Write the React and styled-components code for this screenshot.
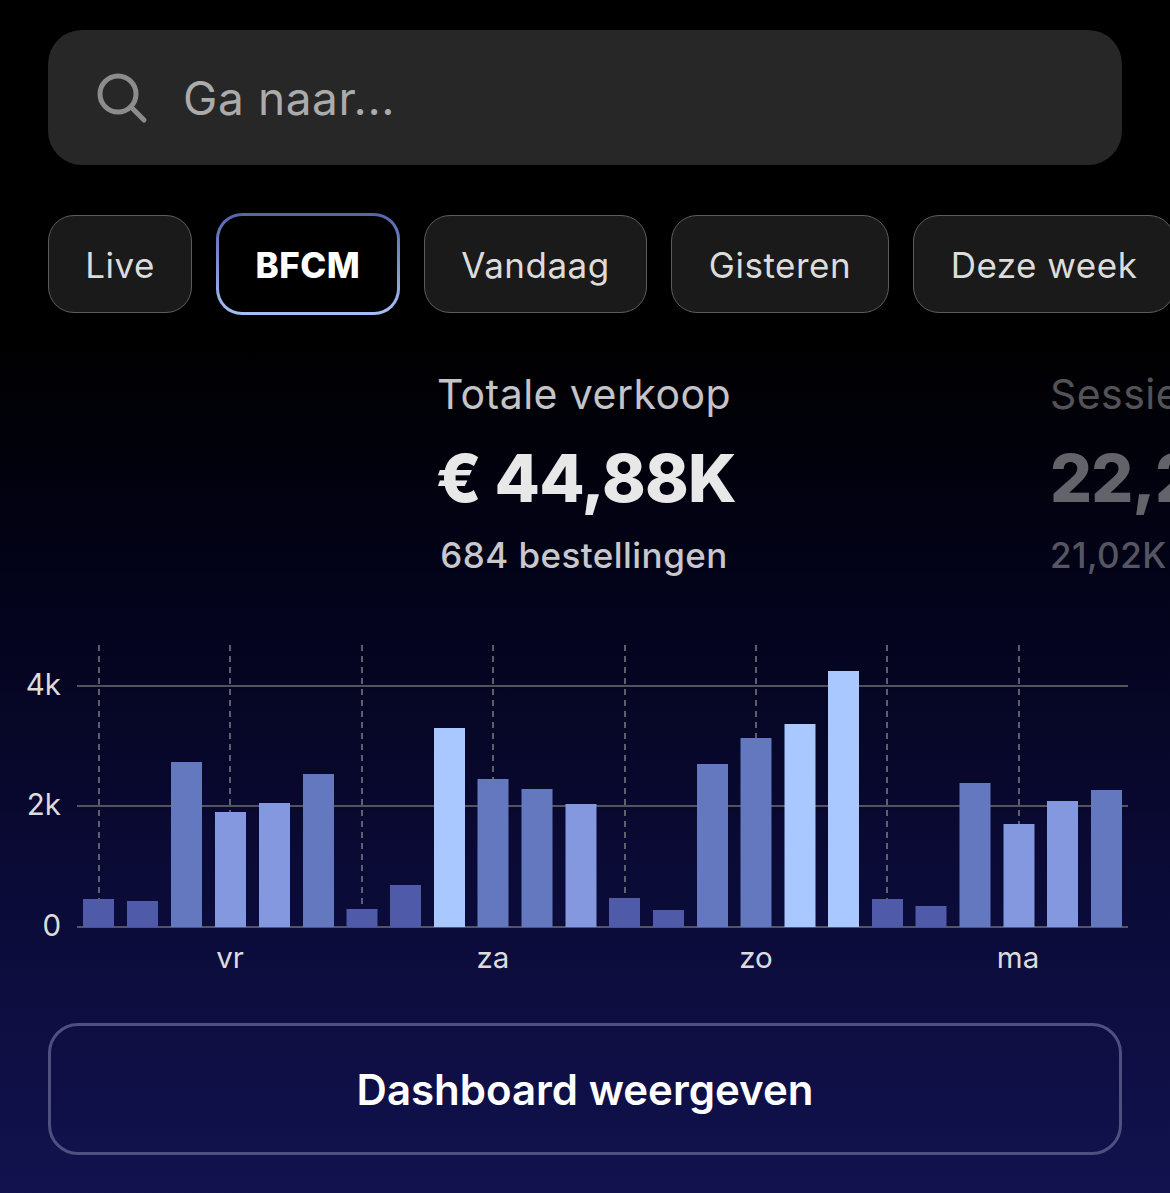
import React from "react";
import styled, { createGlobalStyle } from "styled-components";

const GlobalStyle = createGlobalStyle`
  html, body {
    margin: 0;
    padding: 0;
    background: #000;
  }
  * {
    box-sizing: border-box;
  }
`;

const Page = styled.div`
  width: 1170px;
  height: 1193px;
  overflow: hidden;
  padding-top: 30px;
  font-family: Inter, "Liberation Sans", sans-serif;
  background: linear-gradient(180deg, #000 0, #000 340px, #03031a 590px, #0a0a35 860px, #12124f 1193px);
`;

const SearchBar = styled.div`
  height: 135px;
  margin: 0 48px;
  padding-left: 48px;
  border-radius: 34px;
  background: #272727;
  display: flex;
  align-items: center;
  gap: 35px;
`;

const SearchText = styled.span`
  font-size: 46px;
  letter-spacing: 0.6px;
  color: #ababab;
`;

const ChipRow = styled.div`
  display: flex;
  align-items: center;
  gap: 24px;
  height: 102px;
  margin-top: 48px;
  padding-left: 48px;
`;

const Chip = styled.div`
  flex: none;
  width: ${(p) => p.$w}px;
  height: ${(p) => (p.$active ? 102 : 98)}px;
  border-radius: 26px;
  display: flex;
  align-items: center;
  justify-content: center;
  padding-top: 2px;
  font-size: 35px;
  letter-spacing: 0.5px;
  color: ${(p) => (p.$active ? "#fff" : "#dcdcdc")};
  font-weight: ${(p) => (p.$active ? 800 : 400)};
  background: ${(p) => (p.$active ? "#000" : "#1a1a1a")};
  border: 1px solid #5c5c5c;
  ${(p) =>
    p.$active &&
    `
    border: 3px solid transparent;
    background: linear-gradient(#000, #000) padding-box,
      linear-gradient(180deg, #5664ac, #a4c0f4) border-box;
  `}
`;

const Metrics = styled.div`
  display: flex;
  gap: 318px;
  margin-top: 53px;
  padding-left: 436px;
`;

const Metric = styled.div`
  flex: none;
  width: 296px;
  text-align: ${(p) => (p.$dim ? "left" : "center")};
  opacity: ${(p) => (p.$dim ? 0.42 : 1)};
  white-space: nowrap;
`;

const MetricLabel = styled.div`
  font-size: 41px;
  line-height: 52px;
  letter-spacing: 0.45px;
  color: #c4c4c8;
`;

const MetricValue = styled.div`
  margin-top: 18px;
  margin-right: ${(p) => (p.$lead ? "-3px" : "0")};
  font-size: 66px;
  line-height: 80px;
  font-weight: 800;
  letter-spacing: -0.8px;
  color: #e8e8e8;
`;

const MetricSub = styled.div`
  margin-top: 15px;
  font-size: 35px;
  line-height: 44px;
  font-weight: 500;
  letter-spacing: 0.45px;
  color: #c8c8cc;
`;

const ChartWrap = styled.div`
  margin-top: 53px;
  height: 350px;
`;

const ChartLabel = styled.text`
  font-family: Inter, "Liberation Sans", sans-serif;
  font-size: 29.5px;
  fill: #dcdcdc;
`;

const ViewButton = styled.div`
  height: 132px;
  margin: 43px 48px 0;
  border: 3px solid #4f4f80;
  border-radius: 30px;
  display: flex;
  align-items: center;
  justify-content: center;
  font-size: 42px;
  font-weight: 600;
  color: #fff;
`;

const SHADES = { d: "#4f5ba8", m: "#6478c0", l: "#8398de", x: "#a8c8ff" };

const BARS = [
  [83, 899, "d"], [127, 901, "d"], [171, 762, "m"], [215, 812, "l"],
  [259, 803, "l"], [303, 774, "m"], [346.5, 909, "d"], [390, 885, "d"],
  [434, 728, "x"], [477.5, 779, "m"], [521.5, 789, "m"], [565.5, 804, "l"],
  [609, 898, "d"], [653, 910, "d"], [697, 764, "m"], [740.5, 738, "m"],
  [784.5, 724, "x"], [828, 671, "x"], [872, 899, "d"], [915.5, 906, "d"],
  [959.5, 783, "m"], [1003.5, 824, "l"], [1047, 801, "l"], [1091, 790, "m"],
];

const TICKS = [99, 230, 362, 493, 625, 756, 887, 1019];
const DAYS = [[230, "vr"], [493, "za"], [756, "zo"], [1018, "ma"]];
const LEVELS = [[686, "4k"], [806, "2k"], [927, "0"]];

function SalesChart() {
  // y values in the data are page rows, the svg starts at row 630
  const top = 630;
  return (
    <svg width="1170" height="350" viewBox={`0 ${top} 1170 350`} style={{ display: "block" }}>
      {TICKS.map((x) => (
        <line key={x} x1={x} x2={x} y1={645} y2={927} stroke="#6f6f78" strokeWidth="1.7" strokeDasharray="6 5" />
      ))}
      {LEVELS.map(([y, label]) => (
        <g key={label}>
          <line x1="77" x2="1128" y1={y} y2={y} stroke="#6c6c72" strokeWidth="1.5" />
          <ChartLabel x="61" y={y + 9} textAnchor="end">
            {label}
          </ChartLabel>
        </g>
      ))}
      {BARS.map(([x, y, shade]) => (
        <rect key={x} x={x} y={y} width="31" height={927 - y} fill={SHADES[shade]} />
      ))}
      {DAYS.map(([x, label]) => (
        <ChartLabel key={label} x={x} y="968" textAnchor="middle">
          {label}
        </ChartLabel>
      ))}
    </svg>
  );
}

export default function App() {
  return (
    <Page>
      <GlobalStyle />
      <SearchBar>
        <svg width="52" height="52" viewBox="0 0 52 52" fill="none" stroke="#8c8c8c" strokeWidth="5" strokeLinecap="round">
          <circle cx="22" cy="22" r="18" />
          <path d="M35 35 L48 48" />
        </svg>
        <SearchText>Ga naar...</SearchText>
      </SearchBar>
      <ChipRow>
        <Chip $w={144}>Live</Chip>
        <Chip $w={184} $active>
          BFCM
        </Chip>
        <Chip $w={223}>Vandaag</Chip>
        <Chip $w={218}>Gisteren</Chip>
        <Chip $w={262}>Deze week</Chip>
      </ChipRow>
      <Metrics>
        <Metric>
          <MetricLabel>Totale verkoop</MetricLabel>
          <MetricValue $lead>€ 44,88K</MetricValue>
          <MetricSub>684 bestellingen</MetricSub>
        </Metric>
        <Metric $dim>
          <MetricLabel>Sessies</MetricLabel>
          <MetricValue>22,2K</MetricValue>
          <MetricSub>21,02K bezoekers</MetricSub>
        </Metric>
      </Metrics>
      <ChartWrap>
        <SalesChart />
      </ChartWrap>
      <ViewButton>Dashboard weergeven</ViewButton>
    </Page>
  );
}
